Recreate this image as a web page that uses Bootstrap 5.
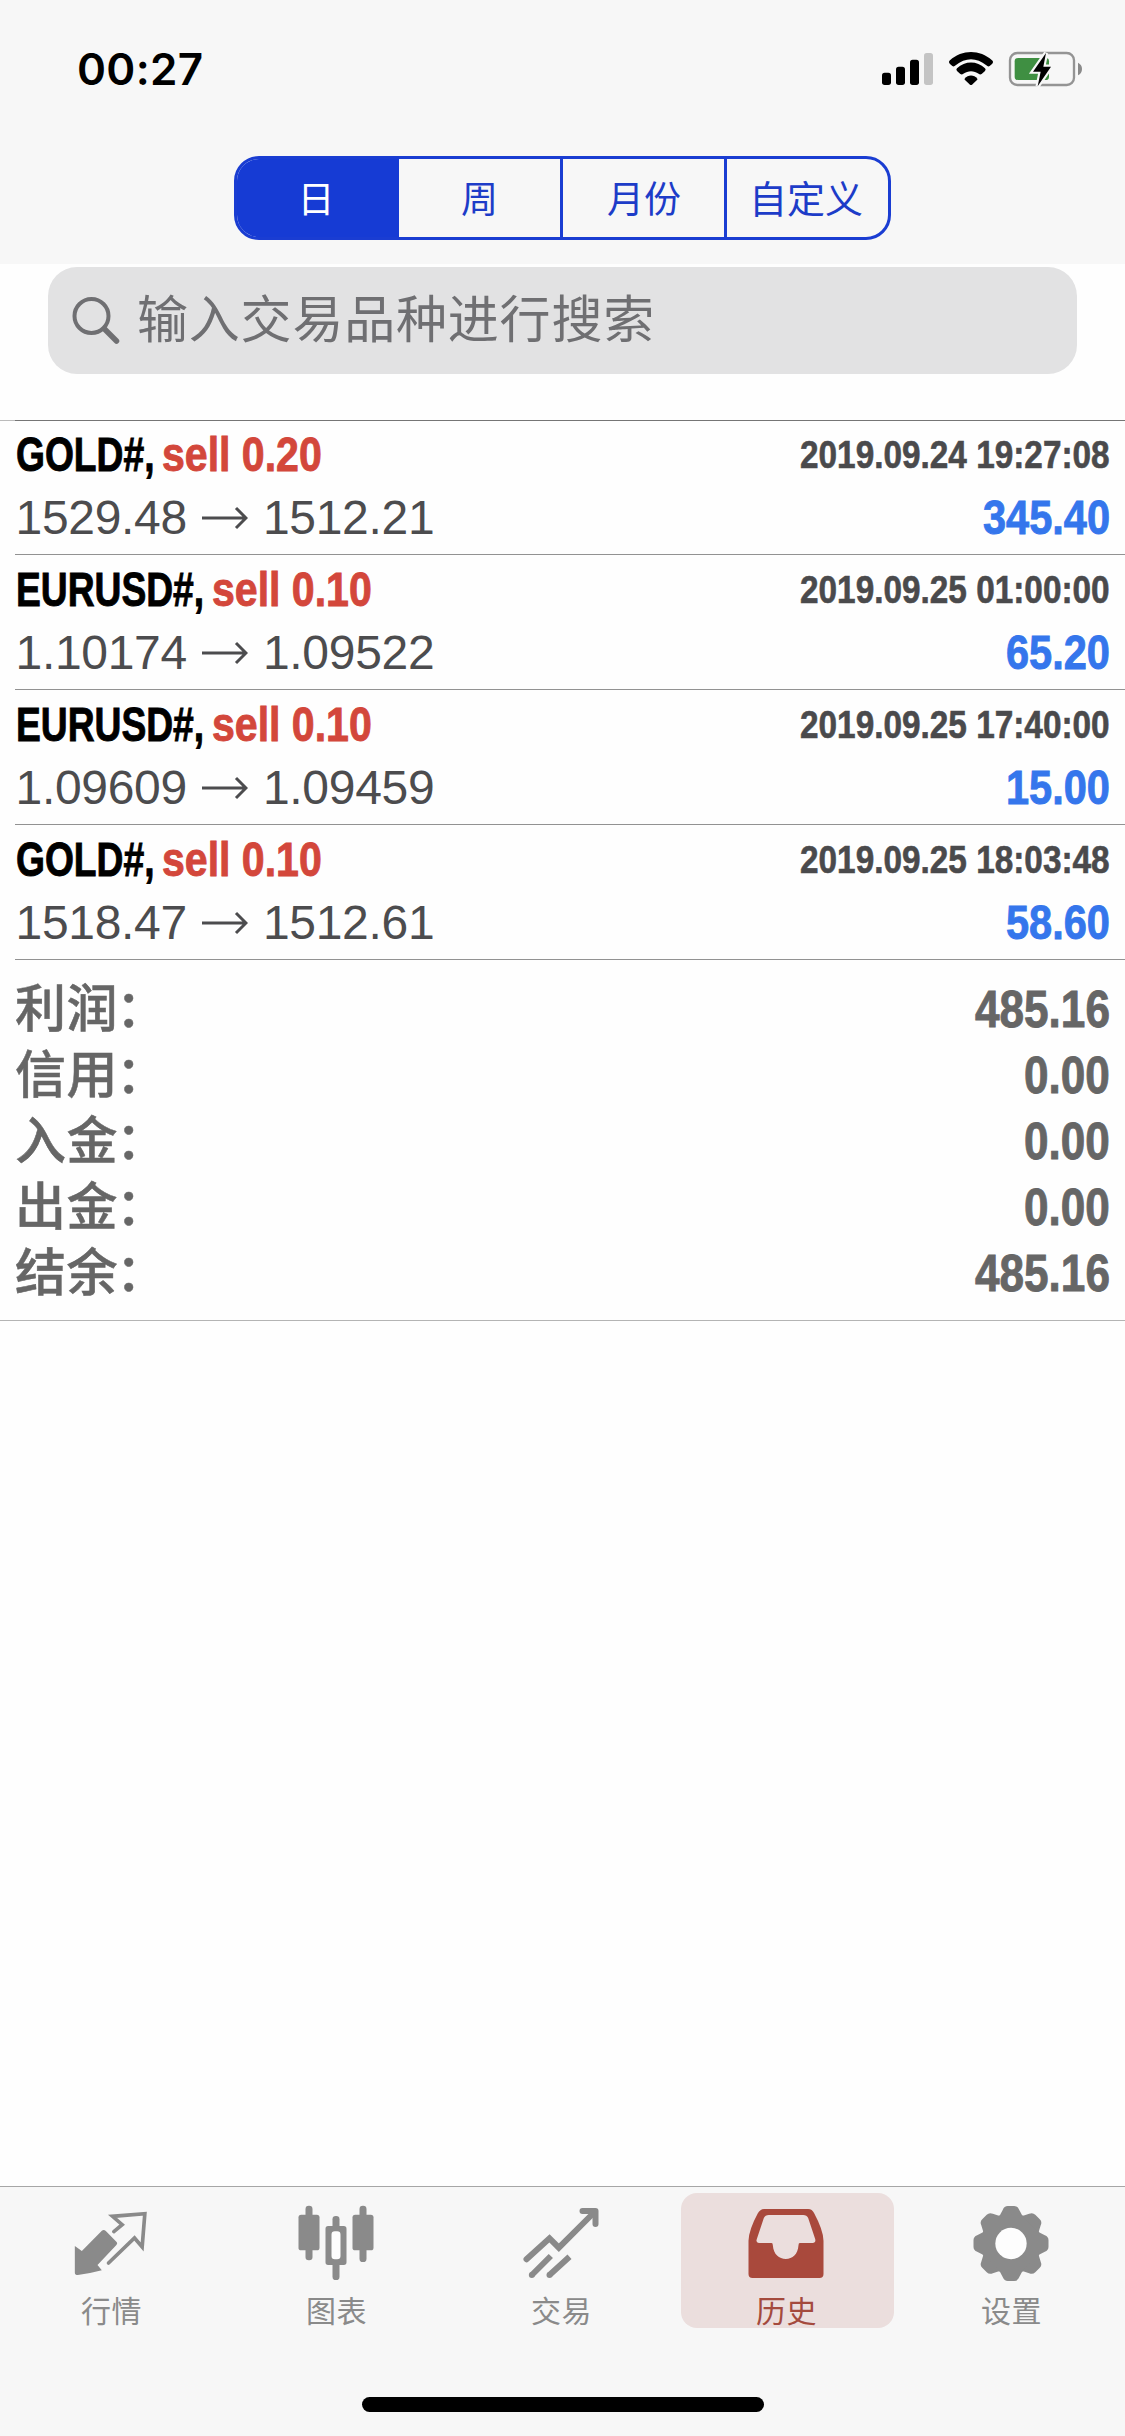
<!DOCTYPE html>
<html lang="zh-CN">
<head>
<meta charset="utf-8">
<meta name="viewport" content="width=device-width, initial-scale=1">
<title>历史</title>
<link href="https://cdn.jsdelivr.net/npm/bootstrap@5.3.0/dist/css/bootstrap.min.css" rel="stylesheet">
<script src="https://cdn.jsdelivr.net/npm/bootstrap@5.3.0/dist/js/bootstrap.bundle.min.js"></script>
<style>
body{width:1125px;height:2436px;margin:0;overflow:hidden;background:#fefefe;font-family:"Liberation Sans","Noto Sans CJK SC",sans-serif}
svg{display:block}
.cjk{font-family:"Noto Sans CJK SC",sans-serif}
.top-bar{height:264px;background:#f7f7f7}
.status-row{height:156px;padding:44px 40px 0 77px}
.clock{font:600 44px/50px Inter,sans-serif;color:#000;letter-spacing:.3px}
.status-icons{margin-top:6px}
.seg{width:657px;height:84px;border:3px solid #1a3dd2;border-radius:25px;overflow:hidden}
.seg.btn-group > .btn{border:0;border-radius:0;margin-left:0;padding:0 0 1px;flex:0 0 auto;font-size:37px;line-height:1;color:#1d3cc8}
.seg.btn-group > .btn:nth-child(1){width:162px;padding-right:4px}
.seg.btn-group > .btn:nth-child(2){width:163px}
.seg.btn-group > .btn:nth-child(3){width:165px;border-left:3px solid #1a3dd2}
.seg.btn-group > .btn:nth-child(4){width:161px;border-left:3px solid #1a3dd2;font-size:38px;padding-bottom:2px}
.seg.btn-group > .btn.active{background:#163bd4;color:#fff}
.search-box{margin:3px 48px 0 48px;height:107px;border-radius:29px;background:#e2e2e3;padding:0 24px;gap:17px;color:#6f6f72}
.search-text{font-size:51px;letter-spacing:.8px;line-height:100px;padding-bottom:9px}
.deals{margin-top:46px}
.deals-rule{height:1px;background:linear-gradient(90deg,#bbb 15px,#757575 15px)}
.deal{margin-left:15px;height:135px;border-bottom:1px solid #929292;padding:3px 15px 0 .5px}
.deal:first-child{height:134px;padding-top:2px}
.deal-line{height:63px;line-height:63px;font-size:48px;white-space:nowrap}
.fit{display:inline-block;font-weight:700;-webkit-text-stroke:.9px currentColor}
.name-box{color:#000}
.type-box{color:#d3473b;margin-left:8px}
.when{font-size:39px;color:#4a4a4c;-webkit-text-stroke-width:.6px}
.gain{color:#3576ec}
.price{color:#4c4c4e;gap:15px}
.price span{letter-spacing:-.3px}
.sums{padding:15px;border-bottom:1px solid #b4b4b4}
.sum-line{height:66px;line-height:69px;color:#666;font-size:51px}
.sum-name{font-weight:500;letter-spacing:.5px;line-height:70px;-webkit-text-stroke:.5px #666}
.sum-colon{margin-left:-2px}
.tabs{height:250px;border-top:1px solid #a6a6a6;background:#f7f7f7}
.tab-item{flex:0 0 225px;padding-top:6px}
.tab-box{width:213px;height:135px;border-radius:16px;padding-top:5px;color:#8a8a8a;font-size:30px;line-height:34px}
.tab-box svg{margin-left:61px}
.tab-box.on{background:#ebdedd;color:#a44a3d}
.tab-name{letter-spacing:.5px;margin-top:4px;padding-right:2px}
.home{width:402px;height:15px;border-radius:8px;background:#000;margin:69px auto 0}
</style>
</head>
<body class="d-flex flex-column">
<header class="top-bar">
  <div class="status-row d-flex justify-content-between align-items-start">
    <span class="clock">00:27</span>
    <svg class="status-icons" width="205" height="40" viewBox="60 30 615 120">
      <g fill="#000"><rect x="66" y="98" width="27" height="37" rx="8"/><rect x="108" y="80" width="27" height="55" rx="8"/><rect x="150" y="59" width="27" height="76" rx="8"/><rect x="192" y="39" width="27" height="96" rx="8" fill="#c4c4c4"/>
      <path d="M270 72Q264 66 270 61C306 28 360 28 396 61Q402 66 396 72L389 78Q384 81 379 76C350 52 316 52 287 76Q282 81 277 78Z"/>
      <path d="M291 93Q287 89 291 85C315 62 351 62 375 85Q379 89 375 93L365 102Q360 105 356 101C342 91 324 91 310 101Q306 105 301 102Z"/>
      <path d="M314 116C324 103 342 103 352 116Q353 118 351 120L336 134Q333 136 330 134L315 120Q313 118 314 116Z"/></g>
      <rect x="450" y="39" width="192" height="96" rx="22" fill="none" stroke="#949494" stroke-width="7"/>
      <path d="M654 68Q666 74 666 87T654 106Z" fill="#8a8a8a"/>
      <rect x="464" y="54" width="103" height="66" rx="10" fill="#3f8f42"/>
      <path d="M558 39L519 95H542L533 139L573 80H550Z" fill="#000" stroke="#f7f7f7" stroke-width="13" paint-order="stroke"/>
    </svg>
  </div>
  <div class="seg btn-group d-flex mx-auto cjk">
    <button type="button" class="btn active">日</button>
    <button type="button" class="btn">周</button>
    <button type="button" class="btn">月份</button>
    <button type="button" class="btn">自定义</button>
  </div>
</header>
<main class="flex-grow-1">
  <div class="search-box d-flex align-items-center">
    <svg width="48" height="50" viewBox="0 0 48 50" fill="none" stroke="#6f6f72" stroke-linecap="round"><circle cx="19.500" cy="20" r="17" stroke-width="4"/><path d="M32.500 33L44.500 45" stroke-width="5.500"/></svg>
    <span class="search-text cjk">输入交易品种进行搜索</span>
  </div>
  <div class="deals">
    <div class="deals-rule"></div>
    <div id="dealList"></div>
    <div class="sums" id="sumList"></div>
  </div>
</main>
<nav class="tabs">
  <div class="d-flex text-center cjk">
    <div class="tab-item"><div class="tab-box mx-auto">
      <svg width="90" height="90" viewBox="82.500 84 270 270"><path d="M106 228L127 243L187 182Q193 177 199 183L232 217Q235 221 230 226L174 285L187 301Q150 311 115 315Q106 315 106 308Z" fill="#8a8a8a"/><path d="M223 185L248 164L219 139L316 131L308 231L285 204L207 279" fill="none" stroke="#8a8a8a" stroke-width="11" stroke-linejoin="miter" stroke-linecap="round"/></svg>
      <div class="tab-name">行情</div></div></div>
    <div class="tab-item"><div class="tab-box mx-auto">
      <svg width="90" height="90" viewBox="757.500 84 270 270" fill="#8a8a8a"><rect x="798" y="107" width="21" height="164" rx="10"/><rect x="777" y="134" width="63" height="107" rx="8"/><rect x="960" y="107" width="21" height="169" rx="10"/><rect x="939" y="134" width="63" height="107" rx="8"/><rect x="879" y="138" width="21" height="45" rx="10"/><rect x="879" y="270" width="21" height="60" rx="10"/><path fill="#fdfdfd" d="M870 178H908V274H870Z"/><path fill-rule="evenodd" d="M866 168H913Q921 168 921 176V277Q921 285 913 285H866Q858 285 858 277V176Q858 168 866 168ZM886 184Q876 184 876 194V258Q876 268 886 268H893Q903 268 903 258V194Q903 184 893 184Z"/></svg>
      <div class="tab-name">图表</div></div></div>
    <div class="tab-item"><div class="tab-box mx-auto">
      <svg width="90" height="90" viewBox="112.500 84 270 270" fill="none" stroke="#8a8a8a" stroke-width="18" stroke-linecap="round" stroke-linejoin="round"><path stroke-linejoin="miter" d="M141 268L210 205L238 233L342 129"/><path d="M309 123H348V162"/><g stroke-linecap="butt"><path d="M157 315L214 258M210 315L270 260"/></g><g fill="#8a8a8a" stroke="none"><circle cx="157" cy="315" r="9"/><circle cx="210" cy="315" r="9"/></g></svg>
      <div class="tab-name">交易</div></div></div>
    <div class="tab-item"><div class="tab-box mx-auto on">
      <svg width="90" height="90" viewBox="247.500 84 270 270" fill="#a9493c"><path fill-rule="evenodd" d="M314 117H446Q458 117 464 130Q491 180 492 212V312Q492 324 480 324H279Q267 324 267 312V212Q268 180 295 130Q302 117 314 117ZM328 135Q317 135 313 144L292 207Q288 218 298 219H336Q340 219 340 226C342 254 359 267 379 267S415 254 417 226Q417 219 421 219H459Q470 218 467 207L446 144Q442 135 431 135Z"/></svg>
      <div class="tab-name">历史</div></div></div>
    <div class="tab-item"><div class="tab-box mx-auto">
      <svg width="90" height="90" viewBox="922.500 84 270 270"><g fill="#8a8a8a"><circle cx="1054.500" cy="220.500" r="91"/><g id="teeth"><path id="tooth" d="M1020 138L1030 119Q1034 108 1045 108H1064Q1075 108 1079 119L1089 138Z"/><use href="#tooth" transform="rotate(45 1054.500 220.500)"/><use href="#tooth" transform="rotate(90 1054.500 220.500)"/><use href="#tooth" transform="rotate(135 1054.500 220.500)"/></g><use href="#teeth" transform="rotate(180 1054.500 220.500)"/></g><circle cx="1054.500" cy="220.500" r="47" fill="#fdfdfd"/></svg>
      <div class="tab-name">设置</div></div></div>
  </div>
  <div class="home"></div>
</nav>
<script>
const deals=[
  ["GOLD#,","sell 0.20","2019.09.24 19:27:08","1529.48","1512.21","345.40"],
  ["EURUSD#,","sell 0.10","2019.09.25 01:00:00","1.10174","1.09522","65.20"],
  ["EURUSD#,","sell 0.10","2019.09.25 17:40:00","1.09609","1.09459","15.00"],
  ["GOLD#,","sell 0.10","2019.09.25 18:03:48","1518.47","1512.61","58.60"]];
const sums=[["利润","485.16"],["信用","0.00"],["入金","0.00"],["出金","0.00"],["结余","485.16"]];
const arrow='<svg width="46" height="24" viewBox="0 0 46 24" fill="none" stroke="#4c4c4e" stroke-width="3"><path d="M0 12H44M34 2L44 12L34 22"/></svg>';
document.getElementById("dealList").innerHTML=deals.map(d=>`
  <div class="deal">
    <div class="deal-line d-flex justify-content-between">
      <div class="d-flex"><span class="fit name-box" data-k=".775">${d[0]}</span><span class="fit type-box" data-k=".855">${d[1]}</span></div>
      <span class="fit when" data-k=".855">${d[2]}</span>
    </div>
    <div class="deal-line d-flex justify-content-between">
      <div class="price d-flex align-items-center"><span>${d[3]}</span>${arrow}<span>${d[4]}</span></div>
      <span class="fit gain" data-k=".865">${d[5]}</span>
    </div>
  </div>`).join("");
document.getElementById("sumList").innerHTML=sums.map(s=>`
  <div class="sum-line d-flex justify-content-between"><span class="sum-name">${s[0]}<span class="sum-colon">：</span></span><span class="fit" data-k=".865">${s[1]}</span></div>`).join("");
/* condense bold text horizontally and give back the width it no longer uses */
document.querySelectorAll(".fit").forEach(e=>{
  const k=+e.dataset.k,w=e.getBoundingClientRect().width;
  e.style.width=w*k+"px";
  e.innerHTML=`<span style="display:inline-block;transform-origin:0 50%;transform:scaleX(${k})">${e.textContent}</span>`;
});
</script>
</body>
</html>
